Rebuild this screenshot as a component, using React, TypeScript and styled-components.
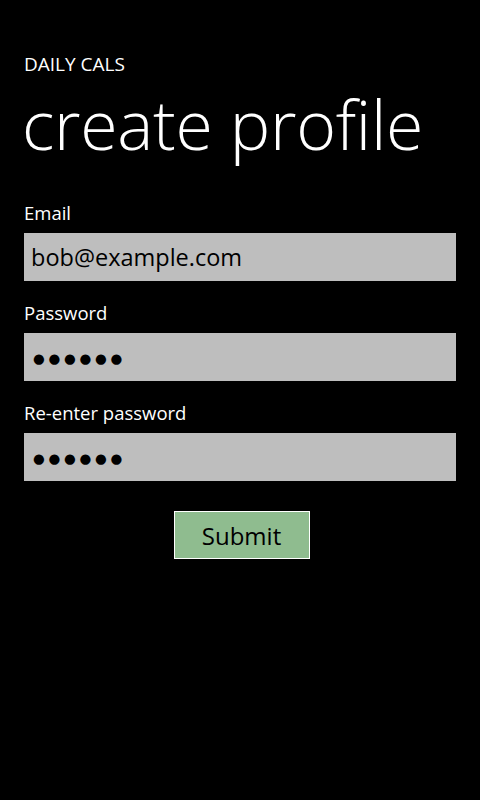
import React from "react";
import styled, { createGlobalStyle } from "styled-components";

const Global = createGlobalStyle`
  html, body { margin: 0; padding: 0; background: #000; }
  body { font-family: "Open Sans", "Noto Sans", sans-serif; color: #fff; }
`;

const Page = styled.div`
  width: 480px;
  height: 800px;
  background: #000;
  box-sizing: border-box;
  padding: 0 24px;
  display: flex;
  flex-direction: column;
`;

const AppName = styled.div`
  margin-top: 52px;
  font-size: 19px;
  line-height: 24px;
`;

const Title = styled.h1`
  margin: 8px 0 0 -2px;
  font-size: 68px;
  font-weight: 300;
  line-height: 80px;
  letter-spacing: -0.3px;
`;

const Form = styled.div`
  margin-top: 37px;
  display: flex;
  flex-direction: column;
`;

const Label = styled.div`
  font-size: 18.5px;
  line-height: 24px;
  height: 24px;
  margin-bottom: 8px;
`;

const Field = styled.div`
  height: 48px;
  background: #bebebe;
  color: #000;
  box-sizing: border-box;
  padding: 0 7px;
  display: flex;
  align-items: center;
  font-size: 23.5px;
  margin-bottom: 20px;
`;

const Dots = styled.span`
  font-family: "DejaVu Sans", sans-serif;
  font-size: 13.5px;
  letter-spacing: 3.7px;
  padding-left: 2px;
  padding-top: 2px;
`;

const ButtonRow = styled.div`
  display: flex;
  justify-content: center;
  margin-top: 10px;
`;

const Button = styled.button`
  width: 136px;
  height: 48px;
  margin-left: 3px;
  background: #8fbc8f;
  border: 1px solid #fff;
  color: #000;
  font-family: "Open Sans", "Noto Sans", sans-serif;
  font-size: 24px;
  padding: 0;
`;

export default function App() {
  return (
    <>
      <Global />
      <Page>
        <AppName>DAILY CALS</AppName>
        <Title>create profile</Title>
        <Form>
          <Label>Email</Label>
          <Field>bob@example.com</Field>
          <Label>Password</Label>
          <Field><Dots>●●●●●●</Dots></Field>
          <Label>Re-enter password</Label>
          <Field><Dots>●●●●●●</Dots></Field>
        </Form>
        <ButtonRow>
          <Button>Submit</Button>
        </ButtonRow>
      </Page>
    </>
  );
}
